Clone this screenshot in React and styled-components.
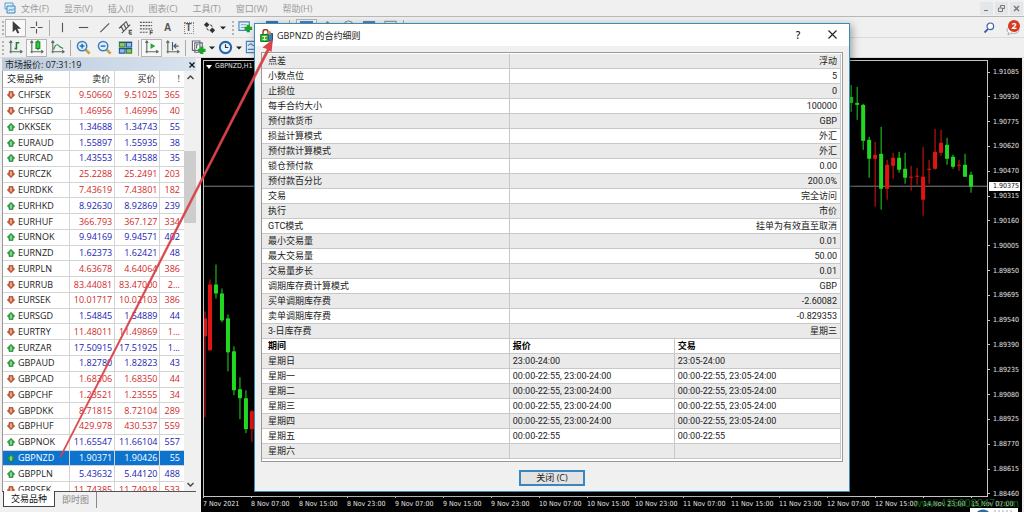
import styled, { createGlobalStyle } from "styled-components";


const symbols = [
    ["CHFSEK", "9.50660", "9.51025", "365", "down"],
    ["CHFSGD", "1.46956", "1.46996", "40", "down"],
    ["DKKSEK", "1.34688", "1.34743", "55", "up"],
    ["EURAUD", "1.55897", "1.55935", "38", "up"],
    ["EURCAD", "1.43553", "1.43588", "35", "up"],
    ["EURCZK", "25.2288", "25.2491", "203", "down"],
    ["EURDKK", "7.43619", "7.43801", "182", "down"],
    ["EURHKD", "8.92630", "8.92869", "239", "up"],
    ["EURHUF", "366.793", "367.127", "334", "down"],
    ["EURNOK", "9.94169", "9.94571", "402", "up"],
    ["EURNZD", "1.62373", "1.62421", "48", "up"],
    ["EURPLN", "4.63678", "4.64064", "386", "down"],
    ["EURRUB", "83.44081", "83.47000", "2...", "down"],
    ["EURSEK", "10.01717", "10.02103", "386", "down"],
    ["EURSGD", "1.54845", "1.54889", "44", "up"],
    ["EURTRY", "11.48011", "11.49869", "1...", "down"],
    ["EURZAR", "17.50915", "17.51925", "1...", "up"],
    ["GBPAUD", "1.82780", "1.82823", "43", "up"],
    ["GBPCAD", "1.68306", "1.68350", "44", "down"],
    ["GBPCHF", "1.23521", "1.23555", "34", "down"],
    ["GBPDKK", "8.71815", "8.72104", "289", "down"],
    ["GBPHUF", "429.978", "430.537", "559", "down"],
    ["GBPNOK", "11.65547", "11.66104", "557", "up"],
    ["GBPNZD", "1.90371", "1.90426", "55", "up"],
    ["GBPPLN", "5.43632", "5.44120", "488", "up"],
    ["GBPSEK", "11.74385", "11.74918", "533", "down"],
];

const specs = [
    ["点差", "浮动"],
    ["小数点位", "5"],
    ["止损位", "0"],
    ["每手合约大小", "100000"],
    ["预付款货币", "GBP"],
    ["损益计算模式", "外汇"],
    ["预付款计算模式", "外汇"],
    ["锁仓预付款", "0.00"],
    ["预付款百分比", "200.0%"],
    ["交易", "完全访问"],
    ["执行", "市价"],
    ["GTC模式", "挂单为有效直至取消"],
    ["最小交易量", "0.01"],
    ["最大交易量", "50.00"],
    ["交易量步长", "0.01"],
    ["调期库存费计算模式", "GBP"],
    ["买单调期库存费", "-2.60082"],
    ["卖单调期库存费", "-0.829353"],
    ["3-日库存费", "星期三"],
];

const sessions = [
    ["星期日", "23:00-24:00", "23:05-24:00"],
    ["星期一", "00:00-22:55, 23:00-24:00", "00:00-22:55, 23:05-24:00"],
    ["星期二", "00:00-22:55, 23:00-24:00", "00:00-22:55, 23:05-24:00"],
    ["星期三", "00:00-22:55, 23:00-24:00", "00:00-22:55, 23:05-24:00"],
    ["星期四", "00:00-22:55, 23:00-24:00", "00:00-22:55, 23:05-24:00"],
    ["星期五", "00:00-22:55", "00:00-22:55"],
    ["星期六", "", ""],
];

const prices = [
    "1.91085", "1.90930", "1.90775", "1.90620", "1.90470", "1.90315",
    "1.90160", "1.90005", "1.89850", "1.89695", "1.89540", "1.89390",
    "1.89235", "1.89080", "1.88925", "1.88770", "1.88615", "1.88460",
];

const dates = [
    "7 Nov 2021", "8 Nov 07:00", "8 Nov 15:00", "8 Nov 23:00",
    "9 Nov 07:00", "9 Nov 15:00", "9 Nov 23:00", "10 Nov 07:00",
    "10 Nov 15:00", "10 Nov 23:00", "11 Nov 07:00", "11 Nov 15:00",
    "11 Nov 23:00", "12 Nov 07:00", "12 Nov 15:00", "14 Nov 23:00",
    "15 Nov 07:00",
];

// x, high, open/close top, open/close bottom, low, rising
const candles = [
    [1, 252, 259, 277, 358, 0],
    [6, 220, 225, 291, 291, 0],
    [12, 205, 225, 234, 239, 1],
    [18, 229, 234, 261, 263, 1],
    [24, 255, 259, 293, 312, 1],
    [30, 287, 292, 331, 336, 1],
    [36, 318, 330, 339, 360, 1],
    [42, 331, 339, 370, 374, 1],
    [48, 351, 352, 370, 383, 0],
    [648, 25, 37, 43, 52, 1],
    [654, 27, 43, 45, 60, 1],
    [660, 44, 45, 81, 90, 1],
    [666, 77, 80, 99, 118, 1],
    [672, 82, 95, 99, 147, 0],
    [678, 67, 94, 129, 150, 1],
    [684, 100, 105, 129, 140, 0],
    [690, 93, 98, 106, 119, 0],
    [696, 92, 98, 110, 113, 1],
    [702, 93, 109, 118, 124, 1],
    [708, 106, 117, 118, 131, 0],
    [714, 108, 116, 117, 125, 0],
    [720, 87, 117, 140, 156, 0],
    [726, 100, 109, 110, 124, 0],
    [732, 69, 92, 109, 110, 0],
    [738, 70, 83, 93, 96, 0],
    [744, 78, 85, 99, 105, 1],
    [750, 95, 97, 107, 109, 1],
    [756, 100, 105, 106, 111, 0],
    [762, 94, 105, 117, 117, 1],
    [768, 112, 115, 127, 133, 1],
];

const Icon = ({ children, size = 15 }) => (
    <svg width={size} height={size} viewBox="0 0 16 16" fill="none" stroke="#555" strokeWidth="1.2">
        {children}
    </svg>
);

const Plus = ({ x, y }) => (
    <path
        d={`M${x} ${y - 4}v8M${x - 4} ${y}h8`}
        stroke="#18a428"
        strokeWidth="3.4"
    />
);

const Axes = () => <path d="M3 1.500v12.500M1.500 12.500h13M1.500 3l1.500-2 1.500 2M13 11l2 1.500-2 1.500" stroke="#5b6a60" />;

const Magnifier = ({ sign }) => (
    <>
        <path d="M9.500 9.500l5 5" stroke="#c9a13a" strokeWidth="2.800" />
        <circle cx="6.500" cy="6.500" r="5" fill="#e2f0fb" stroke="#3d80c4" strokeWidth="1.600" />
        <path d={sign} stroke="#2c6cb8" strokeWidth="1.600" />
    </>
);

const DirectionIcon = ({ up }) => (
    <svg width="8" height="8" viewBox="0 0 8 8">
        <path
            d={up ? "M4 .3L7.700 4 6 5.700V7.500H2V5.700L.3 4z" : "M4 7.700L7.700 4 6 2.300V.5H2v1.800L.3 4z"}
            fill={up ? "#2ba640" : "#cf5a35"}
            stroke={up ? "#167a2a" : "#9c3518"}
            strokeWidth=".6"
        />
        <path d={up ? "M4 2.500v4" : "M4 1.500v4"} stroke="#e8f2e6" strokeWidth="1.100" />
    </svg>
);

const Caret = () => (
    <CaretButton aria-label="更多">
        <svg width="6" height="4" viewBox="0 0 6 4">
            <path d="M0 .5h6L3 3.500z" fill="#222" />
        </svg>
    </CaretButton>
);

const DrawingBar = () => (
    <Toolbar>
        <Grip />
        <ToolButton $pressed aria-label="光标">
            <Icon><path d="M5 1v12l3-3 2 4.500 2-1-2-4.200h4z" fill="#3c3c3c" stroke="none" /></Icon>
        </ToolButton>
        <ToolButton aria-label="十字准线">
            <Icon><path d="M8 1.500v5M8 9.500v5M1.500 8h5M9.500 8h5" /></Icon>
        </ToolButton>
        <Separator />
        <ToolButton aria-label="垂直线"><Icon><path d="M8 3v10" /></Icon></ToolButton>
        <ToolButton aria-label="水平线"><Icon><path d="M3 8h10" /></Icon></ToolButton>
        <ToolButton aria-label="趋势线"><Icon><path d="M3.500 13L13 3.500" /></Icon></ToolButton>
        <ToolButton aria-label="等距通道">
            <Icon>
                <path d="M1 9L9 1.500M4 14l9-9M3 6l3 6M6 4l3 6M9 2l2 5M12 10.500v4.500M12 11h3M12 13h2.500M12 15h3" />
            </Icon>
        </ToolButton>
        <ToolButton aria-label="斐波纳契">
            <Icon>
                <path d="M1 2.500h13M1 6h13M1 9.500h13M1 13h8" strokeDasharray="2 1" />
                <path d="M12 15.500v-4h3M12 13.500h2.500" />
            </Icon>
        </ToolButton>
        <ToolButton aria-label="文字"><Letter>A</Letter></ToolButton>
        <ToolButton aria-label="文字标签"><LetterBox>T</LetterBox></ToolButton>
        <ToolButton aria-label="箭头">
            <Icon>
                <path d="M2 5l3-3 3 3-3 3zM8 11l3-3 3 3-3 3z" fill="#333" stroke="none" />
                <path d="M9 5l2 2M5 9l2 2" />
            </Icon>
        </ToolButton>
        <Caret />
        <Gap />
        <Grip />
        <ToolButton aria-label="新订单">
            <Icon>
                <path d="M1 2h11v9H1z" fill="#e8f3fb" stroke="#4a87b8" />
                <path d="M3 8h5M3 5h6" stroke="#7ba5c4" />
                <Plus x={11} y={9} />
            </Icon>
        </ToolButton>
        <Caret />
        <ToolButton aria-label="市场报价">
            <Icon><path d="M1 1h13v12H1z" fill="#3f74ac" stroke="none" /></Icon>
        </ToolButton>
        <Gap />
        <Separator />
        <Gap />
        <ToolButton $pressed aria-label="导航">
            <Icon><path d="M1 1h14v12H1z" fill="#4b83bf" stroke="none" /></Icon>
        </ToolButton>
        <ToolButton aria-label="数据窗口">
            <Icon><path d="M8 1l6 6H2z" fill="#888" stroke="none" /></Icon>
        </ToolButton>
        <ToolButton aria-label="终端">
            <Icon><circle cx="8" cy="6" r="5" stroke="#888" /></Icon>
        </ToolButton>
        <ToolButton aria-label="测试"><Icon><path d="M1 1h13v12H1z" fill="#5584b5" stroke="none" /></Icon></ToolButton>
        <ToolButton aria-label="编辑器"><Icon><path d="M2 1.500h12v12H2z" stroke="#999" /></Icon></ToolButton>
        <Separator />
        <Tools>
            <a href="#magnifier" aria-label="搜索">
                <svg width="12" height="12" viewBox="0 0 12 12" fill="none">
                    <path d="M1.500 10.500L5 7" stroke="#3a62a8" strokeWidth="1.800" />
                    <circle cx="7.300" cy="4.300" r="3.300" fill="#fff" stroke="#3a62a8" strokeWidth="1.200" />
                </svg>
            </a>
            <Messages href="#messages" aria-label="消息">
                <svg width="14" height="14" viewBox="0 0 14 14">
                    <path d="M1 8c0-5 12-5 12 0 0 3-5 4-8 3l-3 2 .5-2.500C1.500 10 1 9 1 8z" fill="#f8f8f8" stroke="#aaa" />
                </svg>
                <Badge>2</Badge>
            </Messages>
        </Tools>
    </Toolbar>
);

const ChartBar = () => (
    <Toolbar>
        <Grip />
        <ToolButton aria-label="柱状图">
            <Icon><Axes /><path d="M9 2v8M9 3h3M7 9h2" stroke="#1c7a3c" strokeWidth="1.600" /></Icon>
        </ToolButton>
        <ToolButton $pressed aria-label="阴阳烛">
            <Icon>
                <Axes />
                <path d="M9.500 0v11" stroke="#128a22" />
                <rect x="7.500" y="2" width="4" height="7" fill="#2fc944" stroke="#128a22" />
            </Icon>
        </ToolButton>
        <ToolButton aria-label="折线图">
            <Icon><Axes /><path d="M4 10c2-7 5-5 6-3l4 2" stroke="#2b8a46" /></Icon>
        </ToolButton>
        <Separator />
        <ToolButton aria-label="放大"><Icon><Magnifier sign="M4 6.500h5M6.500 4v5" /></Icon></ToolButton>
        <ToolButton aria-label="缩小"><Icon><Magnifier sign="M4 6.500h5" /></Icon></ToolButton>
        <ToolButton aria-label="平铺窗口">
            <Icon>
                <path d="M1.500 2.500h6v5h-6zM9 9h5.500v5H9z" fill="#8fc75a" stroke="#3f8a2c" />
                <path d="M9 2.500h5.500v5H9zM1.500 9h6v5h-6z" fill="#8fbdec" stroke="#2a5ca0" />
                <path d="M1 2.500h14M1 9h14" stroke="#245088" strokeWidth="1.500" />
            </Icon>
        </ToolButton>
        <Separator />
        <ToolButton $pressed aria-label="自动滚动">
            <Icon><Axes /><path d="M7 3.500v6L12 6.500z" fill="#25a33c" stroke="none" /></Icon>
        </ToolButton>
        <ToolButton aria-label="图表平移">
            <Icon><Axes /><path d="M8 2v9M9.500 6.500h5M12 4L9.500 6.500 12 9" stroke="#4a5a70" /></Icon>
        </ToolButton>
        <Separator />
        <ToolButton aria-label="指标">
            <Icon>
                <path d="M1.500 1h8v10h-8zM4 3h8v10H4z" fill="#fff" stroke="#667" />
                <path d="M6 9V5h2" stroke="#667" />
                <Plus x={11.500} y={11} />
            </Icon>
        </ToolButton>
        <Caret />
        <ToolButton aria-label="周期">
            <Icon>
                <circle cx="8" cy="8" r="6" fill="#eaf4fc" stroke="#2766a8" strokeWidth="2.200" />
                <path d="M8 4.500V8h3" stroke="#333" />
            </Icon>
        </ToolButton>
        <Caret />
        <ToolButton aria-label="模板">
            <Icon>
                <path d="M1.500 1.500h13v12h-13z" fill="#dcebf8" stroke="#4a7fb5" />
                <path d="M3 6l3-2 3 2 3-2M3 10h9" stroke="#4a7fb5" />
            </Icon>
        </ToolButton>
    </Toolbar>
);

const MarketWatch = () => (
    <Panel>
        <PanelTitle>
            <span>市场报价: 07:31:19</span>
            <PlainButton aria-label="关闭">
                <svg width="6" height="6" viewBox="0 0 6 6" stroke="#111" strokeWidth="1.300">
                    <path d="M.5 .5l5 5M5.500 .5l-5 5" />
                </svg>
            </PlainButton>
        </PanelTitle>
        <ListArea>
            <QuoteTable>
                <colgroup>
                    <col style={{ width: "37%" }} />
                    <col style={{ width: "25%" }} />
                    <col style={{ width: "25%" }} />
                    <col />
                </colgroup>
                <thead>
                    <tr>
                        <th>交易品种</th>
                        <th>卖价</th>
                        <th>买价</th>
                        <th>!</th>
                    </tr>
                </thead>
                <tbody>
                    {symbols.map(([name, bid, ask, spread, dir]) => (
                        <QuoteRow key={name} $dir={dir} $selected={name === "GBPNZD"}>
                            <td>
                                <SymbolName>
                                    <DirectionIcon up={dir === "up"} />
                                    {name}
                                </SymbolName>
                            </td>
                            <td>{bid}</td>
                            <td>{ask}</td>
                            <td>{spread}</td>
                        </QuoteRow>
                    ))}
                </tbody>
            </QuoteTable>
            <Scrollbar>
                <PlainButton aria-label="向上">
                    <svg width="7" height="5" viewBox="0 0 7 5" fill="none" stroke="#444" strokeWidth="1.400">
                        <path d="M.5 4L3.500 1l3 3" />
                    </svg>
                </PlainButton>
                <Track $grow={67} />
                <Thumb />
                <Track $grow={256} />
                <PlainButton aria-label="向下">
                    <svg width="7" height="5" viewBox="0 0 7 5" fill="none" stroke="#444" strokeWidth="1.400">
                        <path d="M.5 1l3 3 3-3" />
                    </svg>
                </PlainButton>
            </Scrollbar>
        </ListArea>
        <Tabs>
            <Tab $active>交易品种</Tab>
            <Tab>即时图</Tab>
        </Tabs>
    </Panel>
);

const Chart = () => (
    <ChartPane>
        <Plot>
            <svg viewBox="0 1 784 436" preserveAspectRatio="none">
                <path d="M0 126.500h784" stroke="#7c858c" />
                {candles.map(([x, high, top, bottom, low, rising]) => (
                    <g key={x} fill={rising ? "#22d822" : "#e01414"}>
                        <rect x={x - 0.5} y={high} width="1" height={low - high} />
                        <rect x={x - 2} y={top} width="4" height={bottom - top} />
                    </g>
                ))}
            </svg>
            <ChartTitle>
                <svg width="6" height="4" viewBox="0 0 6 4"><path d="M0 0h6L3 4z" fill="#fff" /></svg>
                GBPNZD,H1
            </ChartTitle>
        </Plot>
        <PriceAxis>
            {prices.map((price) => <Price key={price}>{price}</Price>)}
            <CurrentPrice>1.90375</CurrentPrice>
        </PriceAxis>
        <DateAxis>
            {dates.map((date) => <DateLabel key={date}>{date}</DateLabel>)}
        </DateAxis>
        <Watermark>www.435808047.com</Watermark>
        <Stamp viewBox="0 0 48 4">
            <path d="M0 0h48v4H0z" fill="#fff" />
            <path d="M7 4a7 5 0 0 1 12 0z" fill="#2a6aa5" />
            <path d="M24 3h18" stroke="#9ab" strokeDasharray="2 2" />
        </Stamp>
    </ChartPane>
);

const SpecDialog = () => (
    <Dialog role="dialog" aria-labelledby="spec-title">
        <DialogTitle>
            <svg width="13" height="13" viewBox="0 0 13 13">
                <path d="M3 6V3a2 2 0 0 1 5 0v3" fill="none" stroke="#a33a24" strokeWidth="1.500" />
                <path d="M7 4.500h5.500V12H7z" fill="#3f78bd" stroke="#234c86" />
                <circle cx="9" cy="4" r="2" fill="#d08a5a" />
                <path d="M.7 5.500h7.600v7H.7z" fill="#39b53a" stroke="#147a1c" />
                <path d="M2.500 7.500h4M2.500 10.500h4M4.500 7v4.500" stroke="#dff5d8" />
            </svg>
            <h1 id="spec-title">GBPNZD 的合约细则</h1>
            <TitleButton aria-label="帮助">?</TitleButton>
            <TitleButton aria-label="关闭">
                <svg width="9" height="9" viewBox="0 0 9 9" stroke="#222" strokeWidth="1.100">
                    <path d="M.5 .5l8 8M8.500 .5l-8 8" />
                </svg>
            </TitleButton>
        </DialogTitle>
        <DialogBody>
            <TableFrame>
                <SpecTable>
                    <colgroup>
                        <col style={{ width: "42.8%" }} />
                        <col style={{ width: "28.5%" }} />
                        <col />
                    </colgroup>
                    <tbody>
                        {specs.map(([label, value]) => (
                            <tr key={label}>
                                <td>{label}</td>
                                <ValueCell colSpan="2">{value}</ValueCell>
                            </tr>
                        ))}
                        <tr>
                            <th>期间</th>
                            <th>报价</th>
                            <th>交易</th>
                        </tr>
                        {sessions.map(([day, quotes, trades]) => (
                            <tr key={day}>
                                <td>{day}</td>
                                <td>{quotes}</td>
                                <td>{trades}</td>
                            </tr>
                        ))}
                    </tbody>
                </SpecTable>
            </TableFrame>
            <CloseButton>关闭 (C)</CloseButton>
        </DialogBody>
    </Dialog>
);

const App = () => {
    return (
        <Window>
            <GlobalStyle />
            <MenuBar>
                <svg width="12" height="12" viewBox="0 0 12 12" fill="none">
                    <path d="M1 1h8v6H1z" fill="#e4f1fb" stroke="#5a9ccc" />
                    <path d="M3 4h8v7H3z" fill="#d4e8f7" stroke="#4288bd" />
                    <path d="M4.500 9l2-2 1.500 1.500 2-2" stroke="#4288bd" />
                </svg>
                {["文件(F)", "显示(V)", "插入(I)", "图表(C)", "工具(T)", "窗口(W)", "帮助(H)"].map((item) => (
                    <MenuItem key={item}>{item}</MenuItem>
                ))}
                <WindowButtons>
                    <WindowButton aria-label="最小化">
                        <svg width="7" height="7" viewBox="0 0 7 7" stroke="#777"><path d="M1 5.500h4" /></svg>
                    </WindowButton>
                    <WindowButton aria-label="还原">
                        <svg width="7" height="7" viewBox="0 0 7 7" fill="none" stroke="#777">
                            <path d="M2.500 2.500v-2h4v3h-2M.5 3h4v3.500h-4z" />
                        </svg>
                    </WindowButton>
                    <WindowButton aria-label="关闭">
                        <svg width="7" height="7" viewBox="0 0 7 7" stroke="#777" strokeWidth="1.400">
                            <path d="M1 1l5 5M6 1L1 6" />
                        </svg>
                    </WindowButton>
                </WindowButtons>
            </MenuBar>
            <DrawingBar />
            <ChartBar />
            <Workspace>
                <MarketWatch />
                <Chart />
            </Workspace>
            <SpecDialog />
            <Pointer viewBox="0 0 280 470">
                <path d="M60 456.500L267.500 48.500l2 1L61 457z" fill="#d9434a" stroke="#d9434a" strokeWidth=".6" />
                <path d="M273 39l-10.500 8.500 4.500 1.500 4.500 3z" fill="#d9434a" />
            </Pointer>
        </Window>
    );
}

export default App;


const GlobalStyle = createGlobalStyle`
    * {
        box-sizing: border-box;
    }

    body {
        margin: 0;
        overflow: hidden;
        font-family: "Open Sans", "Noto Sans CJK SC", sans-serif;
        font-size: 9px;
        color: #222;
    }

    button {
        font: inherit;
        color: inherit;
        padding: 0;
        border: 0;
        background: none;
    }
`;

const Window = styled.div`
    position: relative;
    display: flex;
    flex-direction: column;
    height: 100vh;
    overflow: hidden;
    background: #f0f0f0;
`;

const MenuBar = styled.div`
    display: flex;
    align-items: center;
    gap: 15px;
    height: 17px;
    margin-bottom: 1px;
    padding-left: 4px;
    border-bottom: 1px solid #b8b8b8;

    > svg {
        margin-right: -10px;
    }
`;

const MenuItem = styled.button`
    color: #9a9a9a;
    line-height: 15px;
    white-space: nowrap;
`;

const WindowButtons = styled.div`
    display: flex;
    gap: 2px;
    margin-left: auto;
    padding-right: 1px;
`;

const WindowButton = styled.button`
    display: flex;
    align-items: center;
    justify-content: center;
    width: 13px;
    height: 13px;
    background: #e4e7ea;
`;

const Toolbar = styled.div`
    display: flex;
    align-items: center;
    height: 20px;
    border-bottom: 1px solid #dadada;
`;

const Grip = styled.div`
    width: 3px;
    height: 14px;
    margin: 0 0 0 2px;
    border-left: 2px dotted #b4b4b4;
`;

const Gap = styled.div`
    width: 4px;
`;

const Separator = styled.div`
    width: 1px;
    height: 16px;
    margin: 0 2px;
    background: #aaa;
`;

const ToolButton = styled.button`
    display: flex;
    align-items: center;
    justify-content: center;
    flex: none;
    width: 21px;
    height: 18px;
    border: 1px solid ${props => props.$pressed ? "#b5b5b5" : "transparent"};
    background: ${props => props.$pressed ? "#f8f8f8" : "transparent"};
`;

const CaretButton = styled.button`
    display: flex;
    width: 6px;
`;

const Letter = styled.span`
    font-family: "Liberation Sans", sans-serif;
    font-size: 10px;
    font-weight: 700;
    color: #555;
`;

const LetterBox = styled(Letter)`
    width: 10px;
    line-height: 10px;
    border: 1px dotted #888;
`;

const Tools = styled.div`
    display: flex;
    align-items: center;
    gap: 11px;
    margin-left: auto;
    padding-right: 4px;

    a {
        display: flex;
        text-decoration: none;
    }
`;

const Messages = styled.a`
    position: relative;
    padding-top: 2px;
`;

const Badge = styled.span`
    position: absolute;
    top: 0;
    right: 0;
    width: 12px;
    height: 12px;
    border-radius: 50%;
    background: #d63a22;
    color: #fff;
    font-weight: 700;
    line-height: 12px;
    text-align: center;
`;

const Workspace = styled.div`
    display: flex;
    flex: 1;
    min-height: 0;
`;

const Panel = styled.div`
    display: flex;
    flex-direction: column;
    flex: none;
    width: 196px;
    padding: 0 0 3px 2px;
`;

const PanelTitle = styled.div`
    display: flex;
    align-items: center;
    justify-content: space-between;
    height: 13px;
    padding: 0 1px 0 3px;
    background: linear-gradient(90deg, #bccbdd, #d8e3ef);
    line-height: 12px;
`;

const PlainButton = styled.button`
    display: flex;
    align-items: center;
    justify-content: center;
`;

const ListArea = styled.div`
    display: flex;
    align-items: flex-start;
    flex: 1;
    min-height: 0;
    overflow: hidden;
    border-left: 1px solid #999;
    background: #fff;
`;

const QuoteTable = styled.table`
    flex: 1;
    height: calc(100% + 7px);
    table-layout: fixed;
    border-collapse: separate;
    border-spacing: 0;

    th,
    td {
        padding: 0 2px;
        border-right: 1px solid #d4d4d4;
        border-bottom: 1px solid #d4d4d4;
        line-height: 12px;
        text-align: right;
    }

    th {
        height: 17px;
        padding: 0 4px;
        font-weight: 400;
    }

    th:first-child,
    td:first-child {
        padding-left: 4px;
        text-align: left;
    }

    th:last-child,
    td:last-child {
        padding-right: 4px;
        border-right: 0;
    }
`;

const QuoteRow = styled.tr`
    background: ${props => props.$selected ? "#0c74cf" : "#fff"};

    td {
        color: ${props => props.$dir === "up" ? "#2222b4" : "#d02a2a"};
        ${props => props.$selected && "color: #fff;"}
    }

    td:first-child {
        color: ${props => props.$selected ? "#fff" : "#222"};
    }
`;

const SymbolName = styled.div`
    display: flex;
    align-items: center;
    gap: 3px;
`;

const Scrollbar = styled.div`
    display: flex;
    flex-direction: column;
    width: 12px;
    height: 100%;
    background: #f0f0f0;

    button {
        height: 13px;
    }
`;

const Track = styled.div`
    flex: ${props => props.$grow};
`;

const Thumb = styled.div`
    flex: 72;
    background: #cdcdcd;
`;

const Tabs = styled.div`
    display: flex;
    height: 18px;
    padding-left: 1px;
    border-top: 1px solid #555;
`;

const Tab = styled.button`
    height: 16px;
    padding: 0 7px;
    line-height: 14px;
    color: ${props => props.$active ? "#111" : "#888"};
    background: ${props => props.$active ? "#fff" : "none"};
    border-right: 1px solid ${props => props.$active ? "#444" : "#888"};
    ${props => props.$active && `
        margin-top: -1px;
        border-left: 1px solid #444;
        border-bottom: 1px solid #444;
    `}
`;

const ChartPane = styled.div`
    position: relative;
    display: grid;
    grid-template-columns: 1fr 34px;
    grid-template-rows: 1fr 15px;
    flex: 1;
    min-width: 0;
    margin: 0 2px 0 5px;
    padding: 2px 0 0 2px;
    background: #000;
    color: #e4e4e4;
    font-family: "DejaVu Sans Condensed", "DejaVu Sans", sans-serif;
    font-size: 7px;
`;

const Plot = styled.div`
    position: relative;
    min-height: 0;
    border: 1px solid #c4c4c4;

    > svg {
        display: block;
        width: 100%;
        height: 100%;
    }
`;

const ChartTitle = styled.div`
    position: absolute;
    top: 0;
    left: 2px;
    display: flex;
    align-items: center;
    gap: 3px;
    line-height: 11px;
`;

const PriceAxis = styled.div`
    position: relative;
    display: flex;
    flex-direction: column;
    justify-content: space-between;
    min-height: 0;
    margin: 7px 0 -2px;
`;

const Price = styled.div`
    display: flex;
    align-items: center;
    gap: 3px;
    line-height: 10px;

    &::before {
        content: "";
        width: 2px;
        height: 1px;
        background: #c4c4c4;
    }
`;

const CurrentPrice = styled.div`
    position: absolute;
    top: 115px;
    left: 1px;
    right: 2px;
    padding-left: 4px;
    background: #fff;
    color: #111;
    line-height: 9px;
`;

const DateAxis = styled.div`
    grid-column: 1 / -1;
    display: flex;
`;

const DateLabel = styled.div`
    flex: none;
    width: 48px;
    line-height: 13px;
    white-space: nowrap;

    &::before {
        content: "";
        display: block;
        width: 1px;
        height: 1px;
        background: #c4c4c4;
    }
`;

const Watermark = styled.div`
    position: absolute;
    right: 3px;
    bottom: 2px;
    color: #0a6412;
    font-family: "Liberation Sans", sans-serif;
    font-size: 11px;
    line-height: 13px;
`;

const Stamp = styled.svg`
    position: absolute;
    right: 4px;
    bottom: 0;
    width: 48px;
    height: 4px;
`;

const Dialog = styled.div`
    position: absolute;
    top: 23px;
    left: 254px;
    width: calc(100% - 428px);
    border: 1px solid #3c8cb8;
    background: #f0f0f0;
    box-shadow: 2px 2px 8px rgba(0, 0, 0, 0.35);
`;

const DialogTitle = styled.div`
    display: flex;
    align-items: center;
    height: 22px;
    padding: 0 0 0 5px;
    background: #fff;

    h1 {
        flex: 1;
        margin: 0 0 0 4px;
        font-size: 9px;
        font-weight: 400;
    }
`;

const TitleButton = styled.button`
    width: 34px;
    font-size: 10px;
    font-weight: 600;
`;

const DialogBody = styled.div`
    display: flex;
    flex-direction: column;
    align-items: center;
    gap: 8px;
    padding: 6px 6px 5px;
`;

const TableFrame = styled.div`
    width: 100%;
    padding: 1px 1px 2px 0;
    border: 1px solid #999;
    background: #fff;
`;

const SpecTable = styled.table`
    width: 100%;
    table-layout: fixed;
    border-collapse: separate;
    border-spacing: 0;
    font-family: Roboto, "Noto Sans CJK SC", sans-serif;

    tr:nth-child(odd) {
        background: #eaeaea;
    }

    th,
    td {
        height: 15px;
        padding: 0 3px;
        border-right: 1px solid #c8c8c8;
        border-bottom: 1px solid #c8c8c8;
        line-height: 14px;
        text-align: left;
    }

    th {
        color: #000;
    }

    th:first-child,
    td:first-child {
        padding-left: 6px;
    }
`;

const ValueCell = styled.td`
    && {
        text-align: right;
    }
`;

const CloseButton = styled.button`
    width: 66px;
    height: 16px;
    border: 2px solid #3a86bf;
    background: #e3e3e3;
    line-height: 12px;
`;

const Pointer = styled.svg`
    position: absolute;
    top: 0;
    left: 0;
    width: 280px;
    height: 470px;
    pointer-events: none;
`;
